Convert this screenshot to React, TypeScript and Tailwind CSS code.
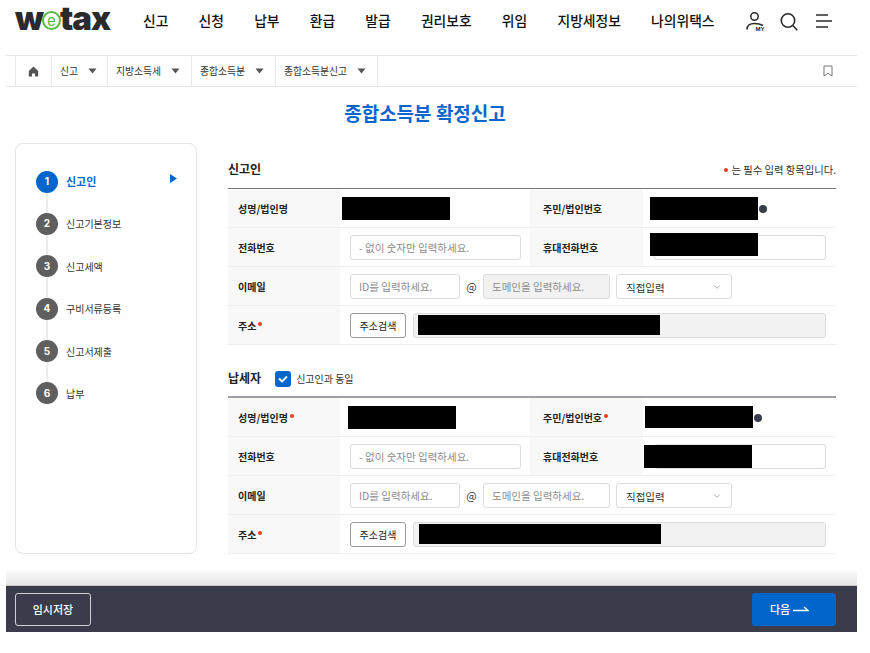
import React from "react";
import { ChevronDown } from "lucide-react";

const FONT = "[font-family:'Noto_Sans_CJK_KR','Noto_Sans',sans-serif]";

function Req() {
  return <span className="ml-[2px] inline-block h-[4px] w-[4px] -translate-y-[1px] rounded-full bg-[#e8401c]" />;
}

function Input({ ph, w, disabled }: { ph: string; w: string; disabled?: boolean }) {
  return (
    <input
      readOnly
      placeholder={ph}
      className={`${w} h-[25px] rounded-[3px] border border-[#dcdcdc] px-[8px] text-[10.5px] text-[#333] outline-none placeholder:text-[#8c8c8c] ${disabled ? "bg-[#f2f2f2]" : "bg-white"}`}
    />
  );
}

function Label({ children, left }: { children: React.ReactNode; left?: boolean }) {
  return (
    <div className={`flex items-center bg-[#f8f8f8] text-[10px] font-bold text-[#222] ${left ? "pl-[10px]" : "pl-[13px]"}`}>
      {children}
    </div>
  );
}

function Black({ w = "w-[108px]", h = "h-[23px]", className = "" }: { w?: string; h?: string; className?: string }) {
  return <div className={`${w} ${h} bg-black ${className}`} />;
}

function Row({ children, columns = 4 }: { children: React.ReactNode; columns?: 2 | 4 }) {
  return (
    <div
      className={`grid h-[39px] border-b border-[#efefef] ${columns === 4 ? "grid-cols-[112px_190px_113px_193px]" : "grid-cols-[112px_496px]"}`}
    >
      {children}
    </div>
  );
}

function EmailRow({ disabled }: { disabled?: boolean }) {
  return (
    <Row columns={2}>
      <Label left>이메일</Label>
      <div className="flex items-center pl-[10px]">
        <Input ph="ID를 입력하세요." w="w-[110px]" />
        <span className="w-[23px] text-center text-[11px] text-[#333]">@</span>
        <Input ph="도메인을 입력하세요." w="w-[127px]" disabled={disabled} />
        <div className="ml-[6px] flex h-[25px] w-[116px] items-center justify-between rounded-[3px] border border-[#dcdcdc] bg-white pl-[9px] pr-[9px] text-[10.5px] leading-[25px] text-[#333]">
          <span className="translate-y-[1px]">직접입력</span>
          <ChevronDown size={10} strokeWidth={1.5} className="translate-y-[1px] text-[#777]" />
        </div>
      </div>
    </Row>
  );
}

function AddressRow({ offset }: { offset: string }) {
  return (
    <Row columns={2}>
      <Label left>
        주소
        <Req />
      </Label>
      <div className="flex items-center pl-[10px]">
        <button className="h-[25px] w-[56px] rounded-[3px] border border-[#999] bg-white text-[10px] text-[#222]">주소검색</button>
        <div className={`ml-[7px] flex h-[25px] w-[413px] items-center rounded-[3px] border border-[#dcdcdc] bg-[#f2f2f2] ${offset}`}>
          <Black w="w-[242px]" h="h-[20px]" />
        </div>
      </div>
    </Row>
  );
}

function Dot() {
  return <span className="ml-[1px] mt-[1px] block h-[8px] w-[8px] rounded-full bg-[#3a3c4b]" />;
}

function Caret() {
  return (
    <svg width="9" height="6" viewBox="0 0 9 6" className="ml-[10px]">
      <path d="M0.5 0.5h8L4.5 5.5z" fill="#555" />
    </svg>
  );
}

const crumbs = [
  { t: "신고", w: "w-[56px]" },
  { t: "지방소득세", w: "w-[84px]" },
  { t: "종합소득분", w: "w-[84px]" },
  { t: "종합소득분신고", w: "w-[102px]" },
];

const nav = ["신고", "신청", "납부", "환급", "발급", "권리보호", "위임", "지방세정보", "나의위택스"];
const steps = ["신고인", "신고기본정보", "신고세액", "구비서류등록", "신고서제출", "납부"];

export default function App() {
  return (
    <div className={`${FONT} h-[653px] w-[870px] overflow-hidden bg-white pl-[6px] text-[#222]`}>
      <div className="w-[851px]">
        {/* Header */}
        <header className="flex h-[56px] items-start border-b border-[#e4e4e4]">
          <div className="ml-[9px] flex h-[36px] w-[100px] items-center text-[33px] font-black leading-[36px] tracking-[-1px] text-[#2b2b2b] [font-family:Inter,sans-serif]">
            <span>w</span>
            <span className="mx-[-1px] mt-[5px] flex h-[19px] w-[19px] shrink-0 items-center justify-center rounded-full border-[2px] border-[#5cb947] bg-white text-[15px] font-normal leading-none tracking-normal text-[#5cb947]">
              e
            </span>
            <span>tax</span>
          </div>
          <nav className="ml-[28px] mt-[10px] flex gap-[30.2px] text-[13.8px] font-medium leading-[20px] text-[#111]">
            {nav.map((n) => (
              <span key={n}>{n}</span>
            ))}
          </nav>
          <div className="relative ml-[31px] mt-[11px] h-[22px] w-[20px]">
            <svg width="20" height="22" viewBox="0 0 20 22" fill="none" stroke="#2b2b2b" strokeWidth="1.5">
              <circle cx="8.5" cy="5.5" r="3.7" />
              <path d="M1 18.5c0-4 3-6 7.500-6 3 0 6 .6 8.500 2" />
            </svg>
            <span className="absolute left-[10px] top-[14px] text-[6px] font-black leading-[8px] text-[#222] [font-family:'Liberation_Sans',sans-serif]">MY</span>
          </div>
          <svg width="19" height="20" viewBox="0 0 19 20" fill="none" stroke="#2b2b2b" strokeWidth="1.6" className="ml-[14px] mt-[12px]">
            <circle cx="8" cy="8.500" r="6.700" />
            <path d="M12.800 13.500l4.500 4.800" />
          </svg>
          <svg width="18" height="16" viewBox="0 0 18 16" stroke="#2b2b2b" strokeWidth="1.4" className="ml-[16px] mt-[14px]">
            <path d="M1 1h12M1 7h16M1 13h12" />
          </svg>
        </header>

        {/* Breadcrumb */}
        <div className="flex h-[31px] items-stretch border-b border-[#e4e4e4] pl-[9px]">
          <div className="flex w-[37px] items-center justify-center border-x border-[#e8e8e8]">
            <svg width="11" height="11" viewBox="0 0 11 11">
              <path d="M5.500 0.500L0.800 5v5.500h3.200V7.500h3v3h3.200V5z" fill="#555" />
            </svg>
          </div>
          {crumbs.map((c) => (
            <div key={c.t} className={`${c.w} flex items-center border-r border-[#e8e8e8] pl-[8px] text-[9.8px] text-[#333]`}>
              <span className="grow-0">{c.t}</span>
              <Caret />
            </div>
          ))}
          <svg width="10" height="12" viewBox="0 0 10 12" fill="none" stroke="#777" strokeWidth="1" className="ml-auto mr-[24px] self-center">
            <path d="M1 1h8v10L5 8.300 1 11z" />
          </svg>
        </div>

        {/* Title */}
        <h1 className="mt-[12px] h-[30px] pr-[13px] text-center text-[19px] font-bold leading-[27px] text-[#0b66cc]">종합소득분 확정신고</h1>

        <div className="mt-[14px] flex items-start pl-[9px]">
          {/* Sidebar */}
          <aside className="h-[411px] w-[182px] rounded-[8px] border border-[#e4e4e4] pl-[20px] pt-[26.500px]">
            <div className="relative flex flex-col gap-[20.400px]">
              <div className="absolute bottom-[10px] left-[10px] top-[10px] w-[2px] bg-[#ececec]" />
              {steps.map((s, i) => (
                <div key={s} className="relative flex h-[22px] items-center">
                  <span
                    className={`flex h-[22px] w-[22px] items-center justify-center rounded-full text-[10px] font-bold text-white [font-family:Inter,sans-serif] ${i === 0 ? "bg-[#0066cc]" : "bg-[#5f5f5f]"}`}
                  >
                    {i + 1}
                  </span>
                  <span className={`ml-[8px] ${i === 0 ? "text-[11px] font-bold text-[#0b66cc]" : "text-[10px] text-[#333]"}`}>{s}</span>
                  {i === 0 && (
                    <svg width="7" height="9" viewBox="0 0 7 9" className="absolute left-[134px] top-[3px]">
                      <path d="M0 0L7 4.500L0 9z" fill="#0b66cc" />
                    </svg>
                  )}
                </div>
              ))}
            </div>
          </aside>

          {/* Form */}
          <main className="ml-[31px] w-[608px]">
            <div className="flex h-[45px] items-end justify-between pb-[10px]">
              <h2 className="text-[12px] font-bold leading-[18px] text-[#222]">신고인</h2>
              <p className="flex items-center text-[10.3px] leading-[16px] text-[#333]">
                <span className="mr-[3px] h-[4px] w-[4px] rounded-full bg-[#e8401c]" />는 필수 입력 항목입니다.
              </p>
            </div>
            <div className="border-t border-[#77777f]">
              <Row>
                <Label left>성명/법인명</Label>
                <div className="flex items-center pl-[2px]">
                  <Black />
                </div>
                <Label>주민/법인번호</Label>
                <div className="flex items-center pl-[7px]">
                  <Black />
                  <Dot />
                </div>
              </Row>
              <Row>
                <Label left>전화번호</Label>
                <div className="flex items-center pl-[10px]">
                  <Input ph="- 없이 숫자만 입력하세요." w="w-[171px]" />
                </div>
                <Label>휴대전화번호</Label>
                <div className="relative flex items-center pl-[11px]">
                  <Input ph="" w="w-[172px]" />
                  <Black className="absolute left-[7px] top-[5px]" />
                </div>
              </Row>
              <EmailRow disabled />
              <AddressRow offset="pl-[4px]" />
            </div>

            <div className="flex h-[51px] items-end pb-[9px]">
              <h2 className="text-[12px] font-bold leading-[18px] text-[#222]">납세자</h2>
              <span className="ml-[14px] flex h-[16px] w-[16px] items-center justify-center rounded-[3px] bg-[#0066cc]">
                <svg width="10" height="8" viewBox="0 0 10 8" fill="none" stroke="#fff" strokeWidth="1.800">
                  <path d="M1 3.500l3 3 5-5" />
                </svg>
              </span>
              <span className="ml-[5px] text-[10px] leading-[16px] text-[#333]">신고인과 동일</span>
            </div>
            <div className="border-t-[2px] border-[#a0a0a6]">
              <Row>
                <Label left>
                  성명/법인명
                  <Req />
                </Label>
                <div className="flex items-center pl-[8px]">
                  <Black />
                </div>
                <Label>
                  주민/법인번호
                  <Req />
                </Label>
                <div className="flex items-center pl-[2px]">
                  <Black h="h-[22px]" />
                  <Dot />
                </div>
              </Row>
              <Row>
                <Label left>전화번호</Label>
                <div className="flex items-center pl-[10px]">
                  <Input ph="- 없이 숫자만 입력하세요." w="w-[171px]" />
                </div>
                <Label>휴대전화번호</Label>
                <div className="relative flex items-center pl-[11px]">
                  <Input ph="" w="w-[172px]" />
                  <Black className="absolute left-[1px] top-[8px]" />
                </div>
              </Row>
              <EmailRow />
              <AddressRow offset="pl-[5px]" />
            </div>
          </main>
        </div>

        {/* Footer */}
        <div className="mt-[14px] h-[18px] border-b border-[#c4c4c4] bg-gradient-to-b from-white to-[#e6e6e6]" />
        <footer className="flex h-[46px] items-center justify-between bg-[#3a3c4b] pl-[9px] pr-[21px]">
          <button className="h-[33px] w-[76px] rounded-[3px] border border-[#d0d0d0] text-[11px] font-medium text-white">임시저장</button>
          <button className="flex h-[33px] w-[84px] items-center rounded-[3px] bg-[#0066cc] pl-[18px] text-[11px] font-medium text-white">
            다음
            <svg width="16" height="6" viewBox="0 0 16 6" fill="none" stroke="#fff" strokeWidth="1.300" className="ml-[3px]">
              <path d="M0 4.500h15L11 1" />
            </svg>
          </button>
        </footer>
      </div>
    </div>
  );
}
